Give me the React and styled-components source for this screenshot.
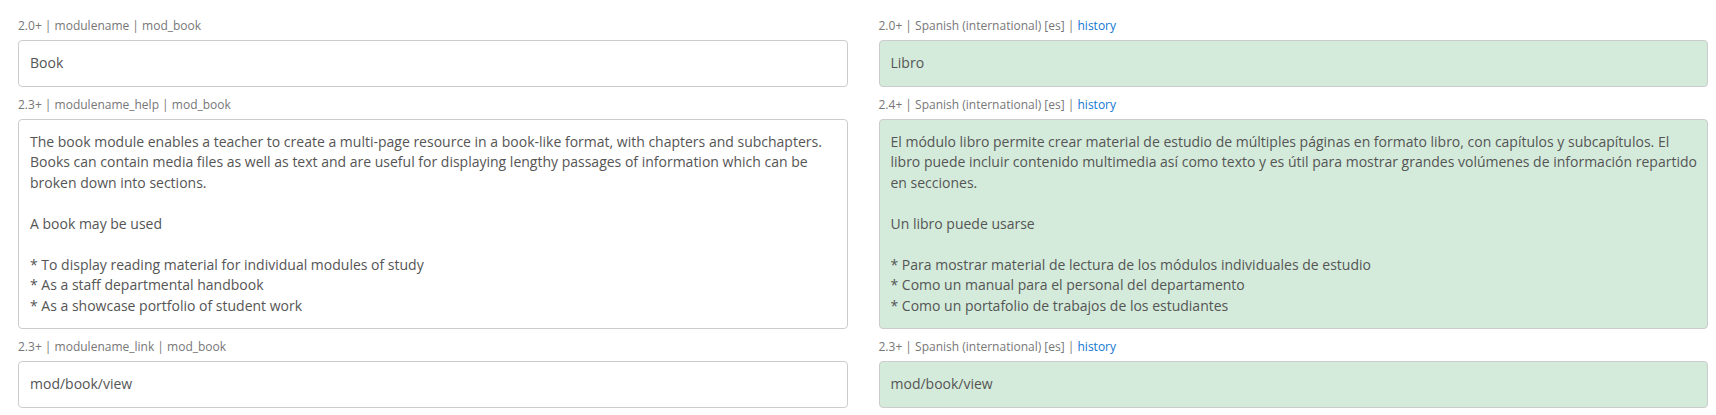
import React from 'react';
import styled, { createGlobalStyle } from 'styled-components';

const GlobalStyle = createGlobalStyle`
	html, body {
		margin: 0;
		padding: 0;
		background: #fff;
		overflow: hidden;
	}
	body {
		font-family: 'Open Sans', 'Liberation Sans', sans-serif;
	}
`;

const Page = styled.div`
	display: grid;
	grid-template-columns: 1fr 1fr;
	column-gap: 31px;
	padding: 17px 8px 0 18px;
`;

const Column = styled.div`
	display: flex;
	flex-direction: column;
	gap: 9px;
`;

const Item = styled.div`
	display: flex;
	flex-direction: column;
`;

const Meta = styled.div`
	font-size: 12px;
	line-height: 18px;
	color: #777;
	margin-bottom: 5px;
	white-space: nowrap;
`;

const History = styled.a`
	color: #1177d1;
	text-decoration: none;
	cursor: pointer;
`;

const Box = styled.div`
	border: 1px solid #ccc;
	border-radius: 4px;
	padding: 12px 8px 12px 11px;
	font-size: 14px;
	line-height: 20.5px;
	color: #555;
	white-space: pre-wrap;
	background-color: ${(props) => (props.translated ? '#d4ebdb' : '#fff')};
`;

const helpEn = `The book module enables a teacher to create a multi-page resource in a book-like format, with chapters and subchapters. Books can contain media files as well as text and are useful for displaying lengthy passages of information which can be broken down into sections.

A book may be used

* To display reading material for individual modules of study
* As a staff departmental handbook
* As a showcase portfolio of student work`;

const helpEs = `El módulo libro permite crear material de estudio de múltiples páginas en formato libro, con capítulos y subcapítulos. El libro puede incluir contenido multimedia así como texto y es útil para mostrar grandes volúmenes de información repartido en secciones.

Un libro puede usarse

* Para mostrar material de lectura de los módulos individuales de estudio
* Como un manual para el personal del departamento
* Como un portafolio de trabajos de los estudiantes`;

const strings = [
	{ id: 'modulename', version: '2.0+', en: 'Book', esVersion: '2.0+', es: 'Libro' },
	{ id: 'modulename_help', version: '2.3+', en: helpEn, esVersion: '2.4+', es: helpEs },
	{ id: 'modulename_link', version: '2.3+', en: 'mod/book/view', esVersion: '2.3+', es: 'mod/book/view' },
];

const App = () => {
	return (
		<>
			<GlobalStyle />
			<Page>
				<Column>
					{strings.map((s) => (
						<Item key={s.id}>
							<Meta>
								{s.version} | {s.id} | mod_book
							</Meta>
							<Box>{s.en}</Box>
						</Item>
					))}
				</Column>
				<Column>
					{strings.map((s) => (
						<Item key={s.id}>
							<Meta>
								{s.esVersion} | Spanish (international) [es] | <History>history</History>
							</Meta>
							<Box translated>{s.es}</Box>
						</Item>
					))}
				</Column>
			</Page>
		</>
	);
};

export default App;
